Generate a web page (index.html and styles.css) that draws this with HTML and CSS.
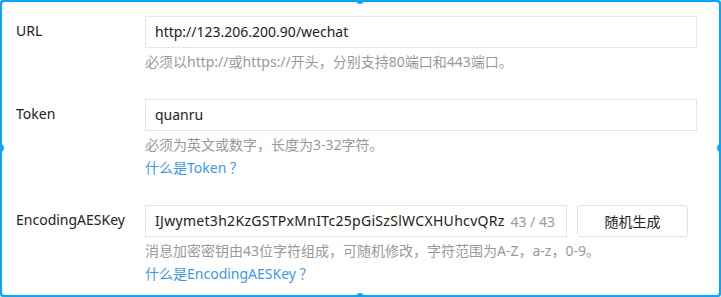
FILE: index.html
```
<!DOCTYPE html>
<html lang="zh-CN">
<head>
<meta charset="utf-8">
<title>服务器配置</title>
<link rel="stylesheet" href="styles.css">
</head>
<body>
<div class="frame">
  <div class="form">
    <div class="row">
      <div class="label">URL</div>
      <div class="field">
        <div class="input"><span class="value">http://123.206.200.90/wechat</span></div>
        <div class="hint">必须以http://或https://开头，分别支持80端口和443端口。</div>
      </div>
    </div>
    <div class="row">
      <div class="label">Token</div>
      <div class="field">
        <div class="input"><span class="value">quanru</span></div>
        <div class="hint">必须为英文或数字，长度为3-32字符。</div>
        <a class="link" href="#">什么是Token<span class="fw">？</span></a>
      </div>
    </div>
    <div class="row">
      <div class="label">EncodingAESKey</div>
      <div class="field">
        <div class="key-line">
          <div class="input key-input"><span class="value">IJwymet3h2KzGSTPxMnITc25pGiSzSlWCXHUhcvQRz</span><span class="counter">43 / 43</span></div>
          <button class="btn" type="button">随机生成</button>
        </div>
        <div class="hint">消息加密密钥由43位字符组成，可随机修改，字符范围为A-Z，a-z，0-9。</div>
        <a class="link" href="#">什么是EncodingAESKey<span class="fw">？</span></a>
      </div>
    </div>
  </div>
  <span class="handle h-tl"></span>
  <span class="handle h-tm"></span>
  <span class="handle h-tr"></span>
  <span class="handle h-ml"></span>
  <span class="handle h-mr"></span>
  <span class="handle h-bl"></span>
  <span class="handle h-bm"></span>
  <span class="handle h-br"></span>
</div>
</body>
</html>
```
FILE: styles.css
```
html, body {
  margin: 0;
  padding: 0;
  background: #fff;
}
body {
  font-family: "Noto Sans", "Noto Sans CJK SC", sans-serif;
  color: #333;
  font-size: 14px;
}
.frame {
  position: relative;
  box-sizing: border-box;
  width: 721px;
  height: 297px;
  border: 2px solid #0aa5ff;
  border-radius: 3px;
  overflow: hidden;
}
.form {
  padding: 14px 22px 0 14px;
  display: flex;
  flex-direction: column;
  gap: 26px;
}
.row {
  display: flex;
}
.label {
  box-sizing: border-box;
  width: 129px;
  flex: none;
  height: 32px;
  padding-bottom: 4px;
  display: flex;
  align-items: center;
  color: #222;
  font-size: 14px;
}
.field {
  flex: 1;
  min-width: 0;
  display: flex;
  flex-direction: column;
  align-items: flex-start;
}
.input {
  box-sizing: border-box;
  width: 100%;
  height: 32px;
  border: 1px solid #e6e6e6;
  padding: 0 11px 0 9px;
  display: flex;
  align-items: center;
  font-size: 14px;
  color: #222;
  background: #fff;
}
.value {
  flex: 1;
  min-width: 0;
  white-space: nowrap;
  overflow: hidden;
  padding-bottom: 1px;
}
.key-input .value {
  letter-spacing: 0.3px;
}
.counter {
  flex: none;
  color: #999;
  margin-left: 4px;
}
.hint {
  margin-top: 3px;
  line-height: 22px;
  font-size: 14px;
  color: #999;
  white-space: nowrap;
}
.link {
  line-height: 22px;
  font-size: 14px;
  color: #3f97e8;
  text-decoration: none;
}
.fw {
  font-family: "Noto Sans CJK SC", sans-serif;
  padding-left: 3px;
}
.key-line {
  display: flex;
  gap: 10px;
  width: 100%;
}
.key-input {
  width: 422px;
  flex: none;
}
.btn {
  box-sizing: border-box;
  width: 111px;
  height: 32px;
  border: 1px solid #e3e3e3;
  border-radius: 3px;
  background: #fff;
  font-family: inherit;
  font-size: 14px;
  color: #222;
  padding: 0;
}
.handle {
  position: absolute;
  width: 8px;
  height: 8px;
  border-radius: 50%;
  background: #0aa5ff;
}
.h-tl { left: -6px; top: -6px; }
.h-tm { left: 354px; top: -6px; }
.h-tr { right: -6px; top: -6px; }
.h-ml { left: -6px; top: 142px; }
.h-mr { right: -6px; top: 142px; }
.h-bl { left: -6px; bottom: -6px; }
.h-bm { left: 354px; bottom: -6px; }
.h-br { right: -6px; bottom: -6px; }
```
